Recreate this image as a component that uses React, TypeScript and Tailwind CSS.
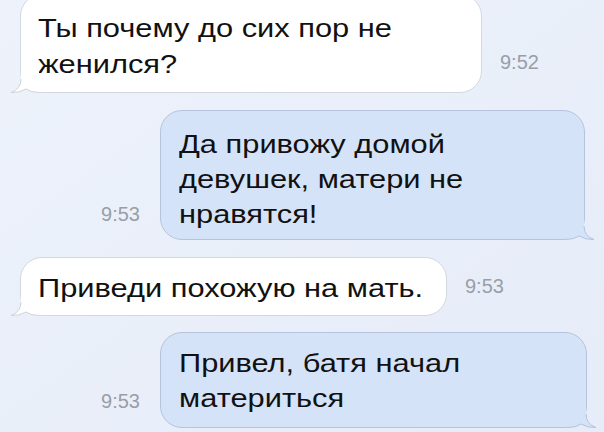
import React from "react";

const font = { fontFamily: '"Liberation Sans", Arial, sans-serif' };

const TailLeft = () => (
  <svg className="absolute -left-[12px] -bottom-[1px]" width="30" height="26" viewBox="0 0 30 26">
    <path d="M12 0 V12 Q12 22 2 25.5 Q10 26 17 22 Q22 25.5 30 25.5 V0 Z" fill="#ffffff" />
    <path d="M12 12 Q12 22 2 25.5 Q10 26 17 22 Q22 25.5 30 25.5" fill="none" stroke="#cdd2da" />
  </svg>
);

const TailRight = () => (
  <svg className="absolute -right-[12px] -bottom-[1px]" width="30" height="26" viewBox="0 0 30 26">
    <path d="M18 0 V12 Q18 22 28 25.5 Q20 26 13 22 Q8 25.5 0 25.5 V0 Z" fill="#d5e3f9" />
    <path d="M18 12 Q18 22 28 25.5 Q20 26 13 22 Q8 25.5 0 25.5" fill="none" stroke="#b5c4dc" />
  </svg>
);

const Time = ({ t }: { t: string }) => (
  <span className="text-[20px] leading-none text-[#9a9ea7] font-light">{t}</span>
);

// the screenshot's text is a bit wider than Arial, so stretch it
const Lines = ({ lines }: { lines: string[] }) => (
  <div className="origin-left scale-x-[1.185] whitespace-nowrap">
    {lines.map((l) => (
      <p key={l}>{l}</p>
    ))}
  </div>
);

export default function App() {
  return (
    <div
      className="w-[604px] h-[432px] overflow-hidden bg-gradient-to-br from-[#edf2fb] to-[#e6ecf8] flex flex-col text-[#111]"
      style={font}
    >
      {/* incoming */}
      <div className="flex items-end pl-[20px] -mt-[6px]">
        <div className="relative w-[462px] h-[99px] bg-white border border-[#d3d8e0] rounded-[22px] pl-[17px] pt-[15px] text-[26px] leading-[36px]">
          <Lines lines={["Ты почему до сих пор не", "женился?"]} />
          <TailLeft />
        </div>
        <div className="ml-[18px] mb-[17px]">
          <Time t="9:52" />
        </div>
      </div>

      {/* outgoing */}
      <div className="flex items-end mt-[17px]">
        <div className="w-[160px] flex justify-end pr-[20px] mb-[16px]">
          <Time t="9:53" />
        </div>
        <div className="relative w-[425px] h-[130px] bg-[#d5e3f9] border border-[#b5c4dc] rounded-[22px] pl-[18px] pt-[16px] text-[26px] leading-[35px]">
          <Lines lines={["Да привожу домой", "девушек, матери не", "нравятся!"]} />
          <TailRight />
        </div>
      </div>

      {/* incoming */}
      <div className="flex items-end pl-[20px] mt-[17px]">
        <div className="relative w-[427px] h-[59px] bg-white border border-[#d3d8e0] rounded-[22px] pl-[17px] pt-[12px] text-[26px] leading-[36px]">
          <Lines lines={["Приведи похожую на мать."]} />
          <TailLeft />
        </div>
        <div className="ml-[18px] mb-[16px]">
          <Time t="9:53" />
        </div>
      </div>

      {/* outgoing */}
      <div className="flex items-end mt-[16px]">
        <div className="w-[160px] flex justify-end pr-[20px] mb-[17px]">
          <Time t="9:53" />
        </div>
        <div className="relative w-[427px] h-[96px] bg-[#d5e3f9] border border-[#b5c4dc] rounded-[22px] pl-[18px] pt-[13px] text-[26px] leading-[35px]">
          <Lines lines={["Привел, батя начал", "материться"]} />
          <TailRight />
        </div>
      </div>
    </div>
  );
}
